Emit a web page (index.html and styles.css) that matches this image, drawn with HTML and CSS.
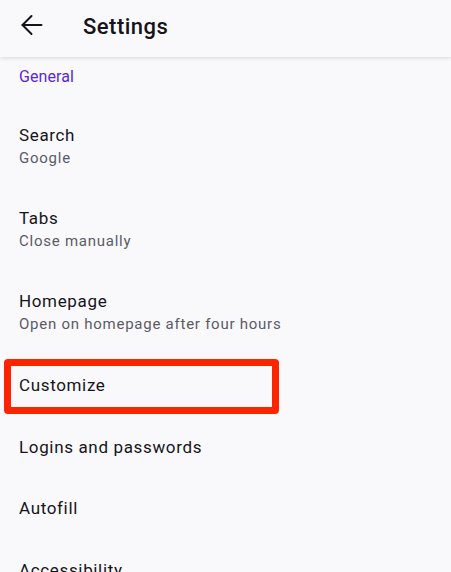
FILE: index.html
```html
<!DOCTYPE html>
<html>
<head>
<meta charset="utf-8">
<link rel="stylesheet" href="styles.css">
</head>
<body>
<header class="appbar">
  <svg class="back" width="24" height="24" viewBox="0 0 24 24" fill="none" stroke="#15141a" stroke-width="2" stroke-linecap="round" stroke-linejoin="round">
    <path d="M2.5 12H21.5"/>
    <path d="M11.5 3L2.5 12L11.5 21"/>
  </svg>
  <h1 class="title">Settings</h1>
</header>
<main class="list">
  <div class="category">General</div>
  <div class="row two">
    <div class="row-title">Search</div>
    <div class="row-sub">Google</div>
  </div>
  <div class="row two">
    <div class="row-title">Tabs</div>
    <div class="row-sub">Close manually</div>
  </div>
  <div class="row two">
    <div class="row-title">Homepage</div>
    <div class="row-sub">Open on homepage after four hours</div>
  </div>
  <div class="row one highlighted">
    <div class="row-title">Customize</div>
    <div class="highlight-box"></div>
  </div>
  <div class="row one">
    <div class="row-title">Logins and passwords</div>
  </div>
  <div class="row one">
    <div class="row-title">Autofill</div>
  </div>
  <div class="row one">
    <div class="row-title">Accessibility</div>
  </div>
</main>
</body>
</html>
```
FILE: styles.css
```css
html, body {
  margin: 0;
  padding: 0;
  background: #f9f9fb;
  font-family: Roboto, "Noto Sans", sans-serif;
  color: #15141a;
  overflow: hidden;
}

.appbar {
  height: 57px;
  box-sizing: border-box;
  display: flex;
  align-items: flex-start;
  padding-top: 13px;
  background: #f9f9fb;
  box-shadow: 0 1px 4px rgba(0, 0, 0, 0.14);
  position: relative;
  z-index: 1;
}

.back {
  margin-left: 20px;
  flex: none;
}

.title {
  margin: 0 0 0 39px;
  font-size: 22px;
  line-height: 28px;
  font-weight: 500;
  letter-spacing: 0.5px;
}

.list {
  display: flex;
  flex-direction: column;
}

.category {
  padding: 8px 19px 0;
  height: 48px;
  box-sizing: border-box;
  font-size: 16px;
  line-height: 24px;
  color: #592acb;
  letter-spacing: 0.1px;
}

.row {
  box-sizing: border-box;
  padding: 0 19px;
  display: flex;
  flex-direction: column;
  justify-content: center;
}

.row.two {
  height: 83px;
  padding-bottom: 2px;
}

.row.one {
  height: 61.5px;
  padding-top: 1px;
}

.row-title {
  font-size: 17px;
  line-height: 24px;
  letter-spacing: 0.65px;
}

.row-sub {
  font-size: 15px;
  line-height: 20px;
  margin-top: 1px;
  color: #5b5b66;
  letter-spacing: 0.75px;
}

.highlighted {
  position: relative;
}

.highlight-box {
  position: absolute;
  left: 4px;
  top: 5px;
  width: 275px;
  height: 55px;
  box-sizing: border-box;
  border: 7px solid #ff2400;
  border-radius: 4px;
}
```
